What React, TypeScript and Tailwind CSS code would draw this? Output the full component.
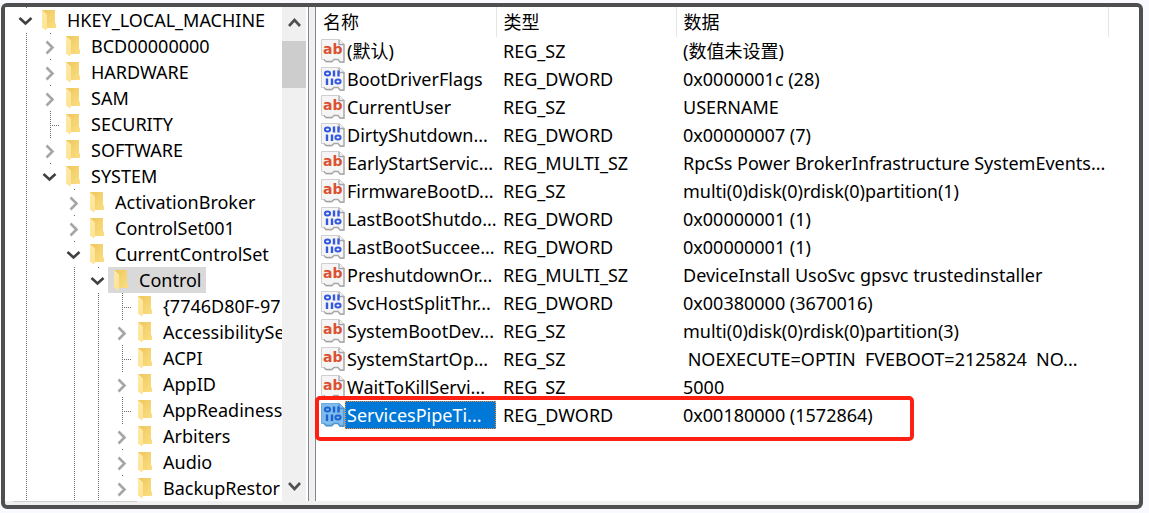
import clsx from 'clsx'

type TreeNode = {
  name: string
  level: number
  state: 'open' | 'closed' | 'leaf'
  guides: number[]
  selected?: boolean
}

type RegValue = {
  name: string
  type: string
  data: string
  selected?: boolean
}

const nodes: TreeNode[] = [
  { name: 'HKEY_LOCAL_MACHINE', level: 0, state: 'open', guides: [] },
  { name: 'BCD00000000', level: 1, state: 'closed', guides: [0] },
  { name: 'HARDWARE', level: 1, state: 'closed', guides: [0] },
  { name: 'SAM', level: 1, state: 'closed', guides: [0] },
  { name: 'SECURITY', level: 1, state: 'leaf', guides: [0] },
  { name: 'SOFTWARE', level: 1, state: 'closed', guides: [0] },
  { name: 'SYSTEM', level: 1, state: 'open', guides: [0] },
  { name: 'ActivationBroker', level: 2, state: 'closed', guides: [0] },
  { name: 'ControlSet001', level: 2, state: 'closed', guides: [0] },
  { name: 'CurrentControlSet', level: 2, state: 'open', guides: [0] },
  { name: 'Control', level: 3, state: 'open', guides: [0, 2], selected: true },
  { name: '{7746D80F-97', level: 4, state: 'leaf', guides: [0, 2, 3] },
  { name: 'AccessibilitySe', level: 4, state: 'closed', guides: [0, 2, 3] },
  { name: 'ACPI', level: 4, state: 'leaf', guides: [0, 2, 3] },
  { name: 'AppID', level: 4, state: 'closed', guides: [0, 2, 3] },
  { name: 'AppReadiness', level: 4, state: 'leaf', guides: [0, 2, 3] },
  { name: 'Arbiters', level: 4, state: 'closed', guides: [0, 2, 3] },
  { name: 'Audio', level: 4, state: 'closed', guides: [0, 2, 3] },
  { name: 'BackupRestor', level: 4, state: 'closed', guides: [0, 2, 3] },
]

const values: RegValue[] = [
  { name: '(默认)', type: 'REG_SZ', data: '(数值未设置)' },
  { name: 'BootDriverFlags', type: 'REG_DWORD', data: '0x0000001c (28)' },
  { name: 'CurrentUser', type: 'REG_SZ', data: 'USERNAME' },
  { name: 'DirtyShutdown...', type: 'REG_DWORD', data: '0x00000007 (7)' },
  {
    name: 'EarlyStartServic...',
    type: 'REG_MULTI_SZ',
    data: 'RpcSs Power BrokerInfrastructure SystemEvents...',
  },
  {
    name: 'FirmwareBootD...',
    type: 'REG_SZ',
    data: 'multi(0)disk(0)rdisk(0)partition(1)',
  },
  { name: 'LastBootShutdo...', type: 'REG_DWORD', data: '0x00000001 (1)' },
  { name: 'LastBootSuccee...', type: 'REG_DWORD', data: '0x00000001 (1)' },
  {
    name: 'PreshutdownOr...',
    type: 'REG_MULTI_SZ',
    data: 'DeviceInstall UsoSvc gpsvc trustedinstaller',
  },
  { name: 'SvcHostSplitThr...', type: 'REG_DWORD', data: '0x00380000 (3670016)' },
  {
    name: 'SystemBootDev...',
    type: 'REG_SZ',
    data: 'multi(0)disk(0)rdisk(0)partition(3)',
  },
  {
    name: 'SystemStartOp...',
    type: 'REG_SZ',
    data: ' NOEXECUTE=OPTIN  FVEBOOT=2125824  NO...',
  },
  { name: 'WaitToKillServi...', type: 'REG_SZ', data: '5000' },
  {
    name: 'ServicesPipeTi...',
    type: 'REG_DWORD',
    data: '0x00180000 (1572864)',
    selected: true,
  },
]

const Folder = () => (
  <svg width="14" height="22" viewBox="0 0 14 22" className="shrink-0">
    <defs>
      <linearGradient id="back" x1="0" y1="0" x2="1" y2="1">
        <stop offset="0" stopColor="#edc65c" />
        <stop offset="1" stopColor="#fbdf83" />
      </linearGradient>
      <linearGradient id="flap" x1="0" y1="0" x2="0" y2="1">
        <stop offset="0" stopColor="#ffe9a6" />
        <stop offset="1" stopColor="#ffe395" />
      </linearGradient>
    </defs>
    <path d="M0 1H13V14L14 15V19H4L0 18Z" fill="url(#back)" />
    <path d="M0 1L4 4.500Q5 5 5 6.500V19.500L4 21.500L0 18.500Z" fill="url(#flap)" />
  </svg>
)

const Guide = ({ full }: { full?: boolean }) => (
  <svg width="24" height="26" className="shrink-0" shapeRendering="crispEdges">
    {full && (
      <path d="M14.500 0V26" stroke="#6e6e6e" strokeDasharray="1 1" fill="none" />
    )}
  </svg>
)

const Expander = ({ state }: { state: TreeNode['state'] }) => {
  if (state === 'leaf') {
    return (
      <svg width="24" height="26" className="shrink-0" shapeRendering="crispEdges">
        <path
          d="M14.500 0V26M16 14.500H25"
          stroke="#6e6e6e"
          strokeDasharray="1 1"
          fill="none"
        />
      </svg>
    )
  }
  return (
    <svg width="24" height="26" className="shrink-0" fill="none">
      <rect x="14" y="0" width="1" height="1" fill="#6e6e6e" />
      {state === 'open' ? (
        <path d="M7.500 11L13.500 16.500L19.500 11" stroke="#404040" strokeWidth="2.600" />
      ) : (
        <path d="M10.500 8.500L16.500 14.500L10.500 20.500" stroke="#a6a6a6" strokeWidth="2.600" />
      )}
    </svg>
  )
}

const ValueIcon = ({ type, selected }: { type: string; selected?: boolean }) => (
  <svg width="24" height="24" viewBox="0 0 24 24" className="shrink-0">
    <path
      d="M0.500 0.500H18.500L23 5V23.500H19L17 20.500H13L11 23H5L3.500 20.500H0.500Z"
      fill={selected ? '#7fbcec' : '#f5f5f5'}
      stroke={selected ? '#68a9de' : '#cfcfcf'}
    />
    <path
      d="M18 1V5.500H23V23H19L17 20.500H13L11 22.500H5L3 20.500"
      fill="none"
      stroke={selected ? '#4f93cc' : '#a6a6a6'}
      strokeWidth="1.300"
    />
    {type === 'REG_DWORD' ? (
      <g stroke={selected ? '#1d62d2' : '#3558e0'} strokeWidth="2" fill="none">
        <ellipse cx="6.500" cy="6.500" rx="2.600" ry="1.900" />
        <path d="M13 3.500V9.500M17.500 3.500V9.500M6 11.500V18M11 11.500V18" strokeWidth="2.400" />
        <ellipse cx="17" cy="14.500" rx="2.600" ry="2" />
      </g>
    ) : (
      <text
        x="2"
        y="15"
        className="font-['DejaVu_Sans'] text-[14px] font-bold"
        fill="#dc5030"
      >
        ab
      </text>
    )}
  </svg>
)

const Tree = () => (
  <nav className="min-w-0 flex-1 overflow-hidden bg-white">
    <ul>
      {nodes.map((node) => (
        <li key={node.name} className="flex h-[26px] pl-[7px]">
          {Array.from({ length: node.level }, (_, i) => (
            <Guide key={i} full={node.guides.includes(i)} />
          ))}
          <Expander state={node.state} />
          <a
            href="#"
            className={clsx(
              'flex shrink-0 items-center gap-[11px] pl-1.5 pr-1 whitespace-nowrap',
              node.selected && 'bg-[#d9d9d9]'
            )}
          >
            <Folder />
            {node.name}
          </a>
        </li>
      ))}
    </ul>
  </nav>
)

const ScrollBar = () => (
  <div className="flex w-6 shrink-0 flex-col bg-[#f0f0f0]">
    <button aria-label="Scroll up" className="h-[34px] shrink-0">
      <svg width="24" height="30" fill="none" stroke="#505050" strokeWidth="2.600">
        <path d="M7 17L12.500 11L18 17" />
      </svg>
    </button>
    <div className="h-[47px] bg-[#cdcdcd]" />
    <button aria-label="Scroll down" className="mt-auto h-7 shrink-0">
      <svg width="24" height="28" fill="none" stroke="#505050" strokeWidth="2.600">
        <path d="M7 10L12.500 16L18 10" />
      </svg>
    </button>
  </div>
)

const ValueList = () => (
  <table className="w-full table-fixed border-collapse whitespace-pre">
    <colgroup>
      <col className="w-[180px]" />
      <col className="w-[180px]" />
      <col className="w-[432px]" />
      <col />
    </colgroup>
    <thead>
      <tr className="h-[30px] text-left">
        <th className="border-r border-[#e5e5e5] p-0 pl-[7px] font-normal">名称</th>
        <th className="border-r border-[#e5e5e5] p-0 pl-[7px] font-normal">类型</th>
        <th className="border-r border-[#e5e5e5] p-0 pl-[7px] font-normal">数据</th>
        <th className="p-0" />
      </tr>
    </thead>
    <tbody>
      {values.map((value) => (
        <tr key={value.name} className="h-7">
          <td className="relative p-0 pl-[5px]">
            <div className="flex h-7 items-center">
              <ValueIcon type={value.type} selected={value.selected} />
              <span
                className={clsx(
                  'flex h-7 flex-1 items-center pl-0.5',
                  value.selected &&
                    'bg-[#0078d7] text-white outline-1 -outline-offset-1 outline-dotted outline-[#ff8728]'
                )}
              >
                {value.name}
              </span>
            </div>
            {value.selected && (
              <div className="absolute -top-[5px] -left-px h-[45px] w-[599px] rounded-[5px] border-4 border-[#ff2014]" />
            )}
          </td>
          <td className="p-0 pl-[7px]">{value.type}</td>
          <td className="p-0 pl-[7px]">{value.data}</td>
          <td className="p-0" />
        </tr>
      ))}
    </tbody>
  </table>
)

export default function App() {
  return (
    <div className="h-screen bg-[#f9faff] pt-[3px] pr-1.5 pb-1 pl-px font-['Noto_Sans','Noto_Sans_CJK_SC',sans-serif] text-[18px] leading-6 text-black">
      <div className="flex h-full flex-col overflow-hidden rounded-md border-4 border-[#4f4f4f] bg-[#f0f0f0]">
        <div className="flex min-h-0 flex-1">
          <aside className="flex w-[304px] shrink-0 border-r border-[#828790] bg-white pr-0.5">
            <Tree />
            <ScrollBar />
          </aside>
          <main className="ml-1.5 min-w-0 flex-1 border-l border-[#828790] bg-white">
            <ValueList />
          </main>
        </div>
        <div className="h-1 shrink-0 pl-2">
          <div className="h-px w-[124px] bg-[#cdcdcd]" />
        </div>
      </div>
    </div>
  )
}
